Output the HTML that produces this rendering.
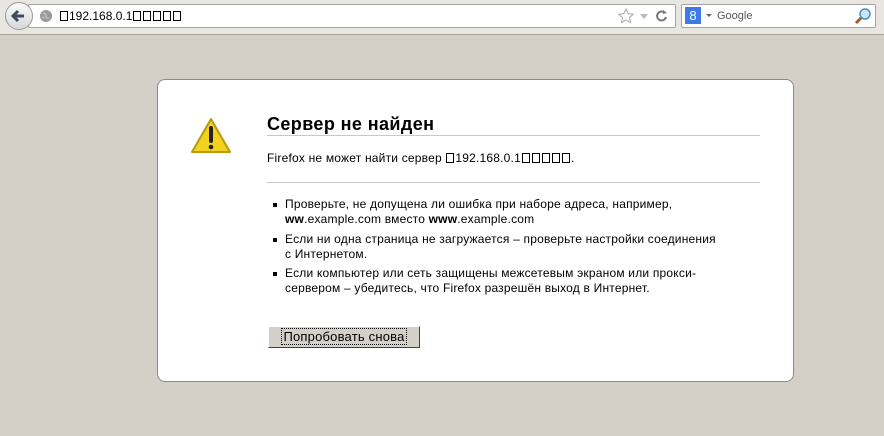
<!DOCTYPE html>
<html><head><meta charset="utf-8"><style>
body{margin:0;width:884px;height:436px;background:#d4d0c8;font-family:"Liberation Sans","DejaVu Sans",sans-serif;position:relative;overflow:hidden}
.tb{position:absolute;left:0;top:0;width:884px;height:34px;background:#e8e6e0;border-bottom:1px solid #a8a49c}
.url{position:absolute;left:28px;top:4px;width:646px;height:22px;background:#fff;border:1px solid #a6a6a6;border-radius:2px}
.back{position:absolute;left:5px;top:2px;width:26px;height:26px;border-radius:50%;background:linear-gradient(#fafafa,#d8d8d8);border:1px solid #9a9a9a}
.srch{position:absolute;left:681px;top:4px;width:193px;height:22px;background:#fff;border:1px solid #a6a6a6;border-radius:2px}
.t{position:absolute;font-size:12px;color:#000;white-space:nowrap;letter-spacing:0.2px}
.tofu{display:inline-block;width:8px;height:10px;border:1px solid #000;font-size:4px;line-height:5px;vertical-align:-1px;margin:0 1px;box-sizing:border-box}
.box{position:absolute;left:157px;top:79px;width:635px;height:301px;background:#fff;border:1px solid #8a8a8a;border-radius:8px}
.hr{position:absolute;left:267px;width:493px;height:1px;background:#c8c8c8}
.bul{position:absolute;left:273px;width:4px;height:4px;background:#000}
.btn{position:absolute;left:268px;top:326px;width:152px;height:22px;background:#d4d0c8;border:1px solid;border-color:#fff #404040 #404040 #fff;box-sizing:border-box;font-size:13px;text-align:center;line-height:19px;letter-spacing:0.2px}
</style></head><body>
<div class="tb">
<div class="url">
<svg style="position:absolute;left:10px;top:4px" width="14" height="14"><circle cx="7" cy="7" r="6" fill="#9a9a9a"/><path d="M4 4q3 0 3 3t3 2M3 9l3-1" stroke="#ccc" fill="none"/></svg>
<div class="t" style="left:30px;top:4px;font-size:12px;letter-spacing:0"><span class="tofu"></span>192.168.0.1<span class="tofu"></span><span class="tofu"></span><span class="tofu"></span><span class="tofu"></span><span class="tofu"></span></div>
<svg style="position:absolute;left:588px;top:2px" width="56" height="18"><path d="M9 2l2.2 4.6 5 .6-3.7 3.4 1 5L9 13l-4.5 2.6 1-5L1.8 7.2l5-.6z" fill="none" stroke="#aaa"/><path d="M23 7h8l-4 5z" fill="#bbb"/><path d="M48 6a4.5 4.5 0 1 0 1 4" stroke="#777" stroke-width="2" fill="none"/><path d="M46 3l4 3-4 1z" fill="#777"/></svg>
</div>
<div class="back"><svg width="26" height="26"><path d="M18 13H8M12 8l-5 5 5 5" stroke="#3a4a60" stroke-width="3" fill="none"/></svg></div>
<div class="srch">
<div style="position:absolute;left:3px;top:2px;width:16px;height:17px;background:#3b7ae8;color:#fff;font-size:13px;text-align:center;line-height:17px">8</div>
<div style="position:absolute;left:24px;top:9px;border:3px solid transparent;border-top:3px solid #666"></div>
<div class="t" style="left:35px;top:5px;color:#555;font-size:11px;letter-spacing:0">Google</div>
<svg style="position:absolute;left:172px;top:2px" width="18" height="18"><circle cx="11" cy="7" r="5" fill="#cde6f7" stroke="#4a8fc0" stroke-width="1.5"/><path d="M7 11l-5 5" stroke="#a0602a" stroke-width="3"/></svg>
</div>
</div>
<div class="box"></div>
<svg style="position:absolute;left:190px;top:117px" width="42" height="38"><path d="M21 2L40 35H2z" fill="#f2d21e" stroke="#b89a10" stroke-linejoin="round" stroke-width="2"/><path d="M21 11v13" stroke="#222" stroke-width="4" stroke-linecap="round"/><circle cx="21" cy="30" r="2.3" fill="#222"/></svg>
<div class="t" style="left:267px;top:114px;font-size:18px;font-weight:bold;letter-spacing:0.4px">Сервер не найден</div>
<div class="hr" style="top:135px"></div>
<div class="t" style="left:267px;top:151px">Firefox не может найти сервер <span class="tofu"></span>192.168.0.1<span class="tofu"></span><span class="tofu"></span><span class="tofu"></span><span class="tofu"></span><span class="tofu"></span>.</div>
<div class="hr" style="top:182px"></div>
<div class="bul" style="top:203px"></div><div class="bul" style="top:238px"></div><div class="bul" style="top:272px"></div>
<div class="t" style="left:285px;top:197px;line-height:15px">Проверьте, не допущена ли ошибка при наборе адреса, например,<br><b>ww</b>.example.com вместо <b>www</b>.example.com</div>
<div class="t" style="left:285px;top:232px;line-height:15px">Если ни одна страница не загружается – проверьте настройки соединения<br>с Интернетом.</div>
<div class="t" style="left:285px;top:266px;line-height:15px">Если компьютер или сеть защищены межсетевым экраном или прокси-<br>сервером – убедитесь, что Firefox разрешён выход в Интернет.</div>
<div class="btn"><span style="outline:1px dotted #000;padding:0 1px">Попробовать снова</span></div>
</body></html>
